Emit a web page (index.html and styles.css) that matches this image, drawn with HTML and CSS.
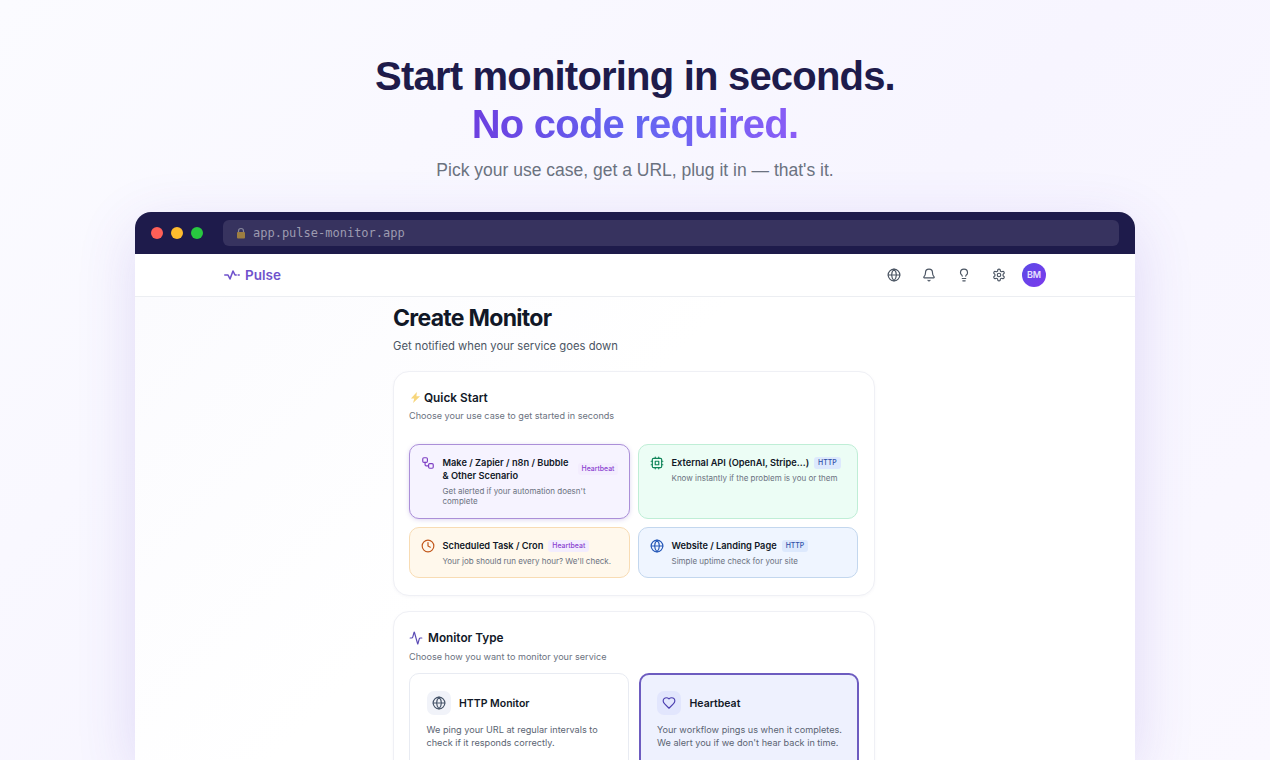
FILE: index.html
```html
<!DOCTYPE html>
<html lang="en">
<head>
<meta charset="utf-8">
<title>Pulse — Start monitoring in seconds</title>
<link rel="stylesheet" href="styles.css">
</head>
<body>
<header class="hero">
  <h1 class="hero-title">Start monitoring in seconds.<br><span class="hero-accent">No code required.</span></h1>
  <p class="hero-sub">Pick your use case, get a URL, plug it in — that's it.</p>
</header>
<section class="window">
  <div class="chrome">
    <span class="dot dot-red"></span><span class="dot dot-yellow"></span><span class="dot dot-green"></span>
    <div class="urlbar">
      <svg class="lock" viewBox="0 0 12 12"><path d="M3.5 5.5V4a2.5 2.5 0 0 1 5 0v1.5" fill="none" stroke="#9a9aa8" stroke-width="1.2"/><rect x="2" y="5" width="8" height="6.5" rx="1" fill="#b8923a"/></svg>
      <span>app.pulse-monitor.app</span>
    </div>
  </div>
  <nav class="nav">
    <div class="brand">
      <svg class="brand-icon" viewBox="0 0 16 10"><path d="M.8 5h3.2L6 9 9 1l2 4h1.2M14.2 5h1"/></svg>
      <span>Pulse</span>
    </div>
    <div class="nav-actions">
      <svg class="nav-icon" viewBox="0 0 24 24"><circle cx="12" cy="12" r="10"/><path d="M12 2a14.5 14.5 0 0 0 0 20 14.5 14.5 0 0 0 0-20"/><path d="M2 12h20"/></svg>
      <svg class="nav-icon" viewBox="0 0 24 24"><path d="M10.268 21a2 2 0 0 0 3.464 0"/><path d="M3.262 15.326A1 1 0 0 0 4 17h16a1 1 0 0 0 .74-1.673C19.41 13.956 18 12.499 18 8A6 6 0 0 0 6 8c0 4.499-1.411 5.956-2.738 7.326"/></svg>
      <svg class="nav-icon" viewBox="0 0 24 24"><path d="M15 14c.2-1 .7-1.7 1.5-2.5 1-.9 1.5-2.2 1.5-3.5A6 6 0 0 0 6 8c0 1 .2 2.2 1.5 3.5.7.7 1.3 1.5 1.5 2.5"/><path d="M9 18h6"/><path d="M10 22h4"/></svg>
      <svg class="nav-icon" viewBox="0 0 24 24"><path d="M12.22 2h-.44a2 2 0 0 0-2 2v.18a2 2 0 0 1-1 1.73l-.43.25a2 2 0 0 1-2 0l-.15-.08a2 2 0 0 0-2.73.73l-.22.38a2 2 0 0 0 .73 2.73l.15.1a2 2 0 0 1 1 1.72v.51a2 2 0 0 1-1 1.74l-.15.09a2 2 0 0 0-.73 2.73l.22.38a2 2 0 0 0 2.73.73l.15-.08a2 2 0 0 1 2 0l.43.25a2 2 0 0 1 1 1.73V20a2 2 0 0 0 2 2h.44a2 2 0 0 0 2-2v-.18a2 2 0 0 1 1-1.73l.43-.25a2 2 0 0 1 2 0l.15.08a2 2 0 0 0 2.73-.73l.22-.39a2 2 0 0 0-.73-2.73l-.15-.08a2 2 0 0 1-1-1.74v-.5a2 2 0 0 1 1-1.74l.15-.09a2 2 0 0 0 .73-2.73l-.22-.38a2 2 0 0 0-2.73-.73l-.15.08a2 2 0 0 1-2 0l-.43-.25a2 2 0 0 1-1-1.73V4a2 2 0 0 0-2-2z"/><circle cx="12" cy="12" r="3"/></svg>
      <span class="avatar">BM</span>
    </div>
  </nav>
  <div class="content">
  <main class="main">
    <h2 class="page-title">Create Monitor</h2>
    <p class="page-sub">Get notified when your service goes down</p>

    <section class="card">
      <h3 class="card-title">
        <svg class="bolt" viewBox="0 0 12 12"><path d="M7.5 0 1 7h3.6L3.4 12 11 4.6H7z"/></svg>
        Quick Start
      </h3>
      <p class="card-sub">Choose your use case to get started in seconds</p>
      <div class="usecases">
        <article class="usecase usecase-purple">
          <svg class="uc-icon ic-purple" viewBox="0 0 24 24"><rect x="3" y="3" width="8" height="8" rx="2"/><path d="M7 11v4a2 2 0 0 0 2 2h4"/><rect x="13" y="13" width="8" height="8" rx="2"/></svg>
          <div class="uc-body">
            <div class="uc-head"><span class="uc-name uc-name-wrap">Make / Zapier / n8n / Bubble &amp; Other Scenario</span><span class="badge badge-hb">Heartbeat</span></div>
            <p class="uc-desc">Get alerted if your automation doesn't complete</p>
          </div>
        </article>
        <article class="usecase usecase-green">
          <svg class="uc-icon ic-green" viewBox="0 0 24 24"><rect x="4" y="4" width="16" height="16" rx="2"/><rect x="9" y="9" width="6" height="6"/><path d="M15 2v2M15 20v2M2 15h2M2 9h2M20 15h2M20 9h2M9 2v2M9 20v2"/></svg>
          <div class="uc-body">
            <div class="uc-head"><span class="uc-name">External API (OpenAI, Stripe...)</span><span class="badge badge-http">HTTP</span></div>
            <p class="uc-desc">Know instantly if the problem is you or them</p>
          </div>
        </article>
        <article class="usecase usecase-orange">
          <svg class="uc-icon ic-orange" viewBox="0 0 24 24"><circle cx="12" cy="12" r="10"/><path d="M12 6v6l4 2"/></svg>
          <div class="uc-body">
            <div class="uc-head"><span class="uc-name">Scheduled Task / Cron</span><span class="badge badge-hb">Heartbeat</span></div>
            <p class="uc-desc">Your job should run every hour? We'll check.</p>
          </div>
        </article>
        <article class="usecase usecase-blue">
          <svg class="uc-icon ic-blue" viewBox="0 0 24 24"><circle cx="12" cy="12" r="10"/><path d="M12 2a14.5 14.5 0 0 0 0 20 14.5 14.5 0 0 0 0-20"/><path d="M2 12h20"/></svg>
          <div class="uc-body">
            <div class="uc-head"><span class="uc-name">Website / Landing Page</span><span class="badge badge-http">HTTP</span></div>
            <p class="uc-desc">Simple uptime check for your site</p>
          </div>
        </article>
      </div>
    </section>

    <section class="card card-type">
      <h3 class="card-title card-title-type">
        <svg class="type-title-icon" viewBox="0 0 24 24"><path d="M22 12h-2.48a2 2 0 0 0-1.93 1.46l-2.35 8.36a.25.25 0 0 1-.48 0L9.24 2.18a.25.25 0 0 0-.48 0l-2.35 8.36A2 2 0 0 1 4.49 12H2"/></svg>
        Monitor Type
      </h3>
      <p class="card-sub card-sub-type">Choose how you want to monitor your service</p>
      <div class="types">
        <article class="type">
          <div class="type-head">
            <span class="type-icon"><svg viewBox="0 0 24 24"><circle cx="12" cy="12" r="10"/><path d="M12 2a14.5 14.5 0 0 0 0 20 14.5 14.5 0 0 0 0-20"/><path d="M2 12h20"/></svg></span>
            <span class="type-name">HTTP Monitor</span>
          </div>
          <p class="type-desc">We ping your URL at regular intervals to check if it responds correctly.</p>
        </article>
        <article class="type type-active">
          <div class="type-head">
            <span class="type-icon"><svg viewBox="0 0 24 24"><path d="M19 14c1.49-1.46 3-3.21 3-5.5A5.5 5.5 0 0 0 16.5 3c-1.76 0-3 .5-4.5 2-1.5-1.5-2.74-2-4.5-2A5.5 5.5 0 0 0 2 8.5c0 2.3 1.5 4.05 3 5.5l7 7Z"/></svg></span>
            <span class="type-name">Heartbeat</span>
          </div>
          <p class="type-desc">Your workflow pings us when it completes. We alert you if we don't hear back in time.</p>
        </article>
      </div>
    </section>
  </main>
  </div>
</section>
</body>
</html>
```

FILE: styles.css
```css
* { box-sizing: border-box; }
html, body { margin: 0; height: 760px; overflow: hidden; }
body {
  background: linear-gradient(135deg, #fbfbff 0%, #f7f5ff 55%, #faf8ff 100%);
  font-family: "Inter", "Liberation Sans", sans-serif;
  color: #111827;
}
h1, h2, h3, p { margin: 0; }

.hero { padding-top: 52px; text-align: center; font-family: "Liberation Sans", sans-serif; }
.hero-title { font-size: 40px; line-height: 48px; font-weight: 700; letter-spacing: -0.8px; color: #1e1b4b; }
.hero-accent {
  background: linear-gradient(90deg, #6d3fe0, #6366f1 50%, #8b5cf6);
  -webkit-background-clip: text;
  background-clip: text;
  color: transparent;
}
.hero-sub { margin-top: 10px; font-size: 17.5px; line-height: 24px; color: #6b7280; }

.window {
  width: 1000px;
  height: 548px;
  margin: 30px auto 0;
  border-radius: 16px 16px 0 0;
  background: #fff;
  overflow: hidden;
  box-shadow: 0 16px 60px rgba(91, 60, 200, .16);
}
.chrome { height: 42px; padding: 8px 16px; background: #1e1b4b; display: flex; align-items: center; gap: 8px; }
.dot { width: 12px; height: 12px; border-radius: 50%; flex: none; }
.dot-red { background: #ff5f57; }
.dot-yellow { background: #febc2e; }
.dot-green { background: #28c840; }
.urlbar {
  flex: 1;
  height: 26px;
  margin-left: 12px;
  padding-left: 12px;
  border-radius: 6px;
  background: #37335f;
  display: flex;
  align-items: center;
  gap: 6px;
  font-family: "DejaVu Sans Mono", monospace;
  font-size: 12px;
  color: #9d9bb0;
}
.lock { width: 12px; height: 12px; opacity: .8; }

.nav { height: 43px; padding: 0 89px 1px 88px; border-bottom: 1px solid #eceef2; display: flex; align-items: center; justify-content: space-between; }
.brand { display: flex; align-items: center; gap: 5px; padding-left: 1px; color: #6f52cc; font-size: 13.5px; font-weight: 600; }
.brand-icon { width: 16px; height: 10px; fill: none; stroke: currentColor; stroke-width: 1.6; stroke-linecap: round; stroke-linejoin: round; }
.nav-actions { display: flex; align-items: center; gap: 21px; }
.nav-icon { width: 14px; height: 14px; fill: none; stroke: #4b5563; stroke-width: 2; stroke-linecap: round; stroke-linejoin: round; }
.avatar {
  width: 24px; height: 24px; margin-left: -5px; border-radius: 50%;
  background: linear-gradient(135deg, #5b4ae6, #7c3aed);
  color: #e9e3ff; font-size: 9px; font-weight: 600;
  display: flex; align-items: center; justify-content: center;
}

.content { height: 505px; background: linear-gradient(135deg, #fbfbfe 0%, #fff 40%); }
.main { width: 482px; margin-left: 258px; padding-top: 7px; }
.page-title { font-size: 23px; line-height: 28px; font-weight: 700; letter-spacing: -.7px; color: #111827; }
.page-sub { margin-top: 6px; font-size: 11.25px; line-height: 16px; color: #4b5563; }

.card { margin-top: 17px; height: 225px; padding: 16.5px 15px 0; border: 1.5px solid #eff0f5; border-radius: 16px; background: #fff; box-shadow: 0 1px 3px rgba(90, 90, 140, .05); }
.card-type { margin-top: 15px; height: 200px; }
.card-title { display: flex; align-items: center; gap: 3px; font-size: 11.8px; line-height: 18px; font-weight: 600; color: #111827; }
.bolt { width: 11px; height: 11px; margin-left: 1px; fill: #f7d67c; }
.card-sub { margin-top: 2.5px; font-size: 9.1px; line-height: 14px; color: #6b7280; }

.usecases { display: grid; grid-template-columns: 221px 220px; grid-template-rows: 75px 51px; gap: 8px; margin-top: 21px; }
.usecase { display: flex; gap: 8px; padding: 11px 10.5px; border: 1.5px solid; border-radius: 10px; }
.usecase-purple { background: #f6f3ff; border-color: #ab8fd8; box-shadow: 0 1px 4px rgba(124, 92, 200, .25); }
.usecase-green { background: #ecfdf5; border-color: #bfeed6; }
.usecase-orange { background: #fff8ec; border-color: #f8dcb4; }
.usecase-blue { background: #eff5ff; border-color: #c3d7ee; }
.uc-icon { flex: none; width: 14px; height: 14px; fill: none; stroke-width: 2; stroke-linecap: round; stroke-linejoin: round; }
.ic-purple { stroke: #7e3fc4; }
.ic-green { stroke: #10855a; }
.ic-orange { stroke: #c2571a; }
.ic-blue { stroke: #2558b8; }
.uc-body { min-width: 0; }
.uc-head { display: flex; align-items: center; gap: 5px; }
.uc-name { font-size: 9.25px; line-height: 13px; font-weight: 600; color: #111827; white-space: nowrap; }
.uc-name-wrap { width: 130px; white-space: normal; }
.badge { padding: 0 4px; border-radius: 3px; font-size: 6.9px; line-height: 12px; font-weight: 500; white-space: nowrap; }
.badge-hb { background: #f3edfe; color: #8a3fd0; }
.badge-http { background: #dde9fd; color: #2f4fa8; }
.uc-desc { margin-top: 3.5px; font-size: 8px; line-height: 10.5px; color: #6b7280; }

.card-title-type { gap: 5px; }
.type-title-icon { width: 14px; height: 14px; fill: none; stroke: #5b4bb5; stroke-width: 2; stroke-linecap: round; stroke-linejoin: round; }
.card-sub-type { margin-top: 3px; }
.types { display: grid; grid-template-columns: 220px 220px; gap: 10px; margin-top: 9.5px; }
.type { height: 130px; padding: 17px 16.5px 16px; border: 1.5px solid #e8ebf2; border-radius: 10px; background: #fff; }
.type-active { border: 2px solid #6d5cc0; background: #eef1fe; padding: 16px 12px 16px 16px; }
.type-head { display: flex; align-items: center; gap: 8.5px; }
.type-icon { width: 24px; height: 24px; border-radius: 7px; background: #f1f3f9; display: flex; align-items: center; justify-content: center; }
.type-active .type-icon { background: #e2e6fd; }
.type-icon svg { width: 14px; height: 14px; fill: none; stroke: #475569; stroke-width: 2; stroke-linecap: round; stroke-linejoin: round; }
.type-active .type-icon svg { stroke: #4c3fb0; }
.type-name { font-size: 10.5px; font-weight: 600; color: #111827; }
.type-desc { margin-top: 8px; font-size: 9.15px; line-height: 13px; color: #5b6472; }
```
